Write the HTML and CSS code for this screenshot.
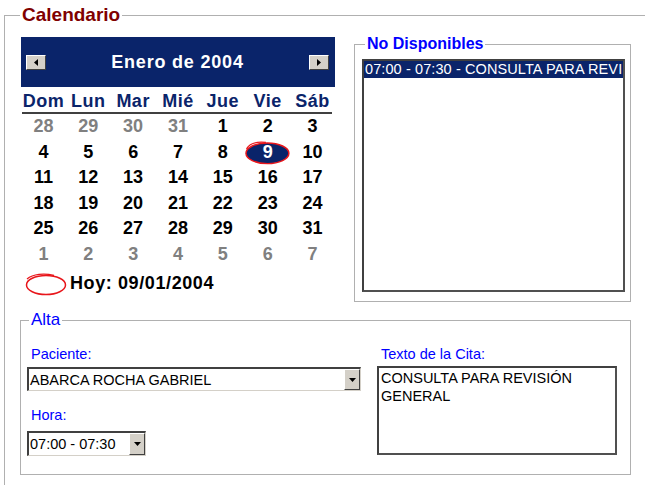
FILE: index.html
```html
<!DOCTYPE html>
<html lang="es">
<head>
<meta charset="utf-8">
<title>Calendario</title>
<link rel="stylesheet" href="styles.css">
</head>
<body>
<fieldset class="frame">
  <legend class="frame-title">Calendario</legend>
  <div class="top">
    <div class="cal">
      <div class="cal-head">
        <span class="nav-btn"><svg width="4" height="7" viewBox="0 0 4 7"><polygon points="4,0 0,3.5 4,7" fill="#000"/></svg></span>
        <span class="cal-title">Enero de 2004</span>
        <span class="nav-btn"><svg width="4" height="7" viewBox="0 0 4 7"><polygon points="0,0 4,3.5 0,7" fill="#000"/></svg></span>
      </div>
      <div class="dow-row">
        <div class="dow">Dom</div><div class="dow">Lun</div><div class="dow">Mar</div><div class="dow">Mié</div><div class="dow">Jue</div><div class="dow">Vie</div><div class="dow">Sáb</div>
      </div>
      <div class="rule"></div>
      <div class="cal-grid">
        <div class="day other">28</div><div class="day other">29</div><div class="day other">30</div><div class="day other">31</div><div class="day">1</div><div class="day">2</div><div class="day">3</div>
        <div class="day">4</div><div class="day">5</div><div class="day">6</div><div class="day">7</div><div class="day">8</div>
        <div class="day sel"><svg class="sel-mark" viewBox="0 0 45 26" preserveAspectRatio="none"><ellipse cx="22.5" cy="13.5" rx="21.5" ry="10.5" fill="#0a246a" stroke="#e8161b" stroke-width="1.5"/><path d="M1.5 9 C 5 3, 12 1.5, 21 2.5" fill="none" stroke="#e8161b" stroke-width="1.3"/></svg><span class="num">9</span></div>
        <div class="day">10</div>
        <div class="day">11</div><div class="day">12</div><div class="day">13</div><div class="day">14</div><div class="day">15</div><div class="day">16</div><div class="day">17</div>
        <div class="day">18</div><div class="day">19</div><div class="day">20</div><div class="day">21</div><div class="day">22</div><div class="day">23</div><div class="day">24</div>
        <div class="day">25</div><div class="day">26</div><div class="day">27</div><div class="day">28</div><div class="day">29</div><div class="day">30</div><div class="day">31</div>
        <div class="day other">1</div><div class="day other">2</div><div class="day other">3</div><div class="day other">4</div><div class="day other">5</div><div class="day other">6</div><div class="day other">7</div>
      </div>
      <div class="today">
        <svg class="today-mark" width="44" height="24" viewBox="0 0 44 24"><ellipse cx="22" cy="13" rx="19.5" ry="9.5" fill="none" stroke="#e8161b" stroke-width="1.5"/><path d="M3 7 C 9 2, 20 1, 30 3.5" fill="none" stroke="#e8161b" stroke-width="1.3"/></svg>
        <span class="today-text">Hoy: 09/01/2004</span>
      </div>
    </div>
    <fieldset class="box nodisp">
      <legend class="box-title strong">No Disponibles</legend>
      <div class="listbox">
        <div class="list-item">07:00 - 07:30 - CONSULTA PARA REVI</div>
      </div>
    </fieldset>
  </div>
  <fieldset class="box alta">
    <legend class="box-title alta-title">Alta</legend>
    <div class="alta-body">
      <div class="col-left">
        <div class="lbl">Paciente:</div>
        <div class="combo combo-wide"><span class="combo-text">ABARCA ROCHA GABRIEL</span><span class="combo-btn"><svg width="7" height="4" viewBox="0 0 7 4"><polygon points="0,0 7,0 3.5,4" fill="#000"/></svg></span></div>
        <div class="lbl lbl-hora">Hora:</div>
        <div class="combo combo-narrow"><span class="combo-text">07:00 - 07:30</span><span class="combo-btn"><svg width="7" height="4" viewBox="0 0 7 4"><polygon points="0,0 7,0 3.5,4" fill="#000"/></svg></span></div>
      </div>
      <div class="col-right">
        <div class="lbl">Texto de la Cita:</div>
        <div class="textarea">CONSULTA PARA REVISIÓN GENERAL</div>
      </div>
    </div>
  </fieldset>
</fieldset>
</body>
</html>
```

FILE: styles.css
```css
html, body {
  margin: 0;
  padding: 0;
  overflow: hidden;
  background: #fff;
}
body {
  width: 645px;
  height: 485px;
  font-family: "Liberation Sans", Arial, sans-serif;
  color: #000;
}

.frame {
  margin: 4px 0 0 4px;
  padding: 9px 0 0 0;
  border: 1px solid #b0b0b0;
  border-right: none;
  border-bottom: none;
  width: 641px;
  height: 481px;
  box-sizing: border-box;
}
.frame-title {
  margin-left: 15px;
  padding: 0 2px;
  font-weight: bold;
  font-size: 19px;
  line-height: 22px;
  color: #800000;
}

.top {
  display: flex;
  align-items: flex-start;
}

.cal {
  width: 314px;
  margin: 2px 0 0 16px;
}
.cal-head {
  height: 50px;
  background: #0a246a;
  display: flex;
  align-items: center;
  padding: 0 6px 0 5px;
  box-sizing: border-box;
}
.cal-title {
  flex: 1;
  text-align: center;
  color: #fff;
  font-weight: bold;
  font-size: 18px;
  letter-spacing: 0.8px;
}
.nav-btn {
  width: 20px;
  height: 15px;
  box-sizing: border-box;
  background: #d4d0c8;
  border: 1px solid;
  border-color: #fff #404040 #404040 #fff;
  display: flex;
  align-items: center;
  justify-content: center;
}
.nav-btn svg { display: block; }

.dow-row {
  display: grid;
  grid-template-columns: repeat(7, 1fr);
  padding-top: 4px;
}
.dow {
  text-align: center;
  color: #0a246a;
  font-weight: bold;
  font-size: 18px;
  line-height: 21px;
  letter-spacing: 0.5px;
}
.rule {
  height: 2px;
  margin: 0 3px 0 1px;
  background: #404040;
}

.cal-grid {
  display: grid;
  grid-template-columns: repeat(7, 1fr);
  grid-auto-rows: 25.6px;
}
.day {
  position: relative;
  text-align: center;
  font-weight: bold;
  font-size: 18px;
  line-height: 25.6px;
  color: #000;
}
.day.other { color: #808080; }
.day.sel { color: #fff; }
.sel-mark {
  position: absolute;
  left: 0;
  top: 0;
  width: 100%;
  height: 100%;
}
.num {
  position: relative;
}

.today {
  display: flex;
  align-items: center;
  height: 26px;
  margin-top: 3px;
}
.today-mark {
  display: block;
  margin-left: 3px;
  margin-right: 2px;
}
.today-text {
  font-weight: bold;
  font-size: 18px;
  letter-spacing: 0.6px;
}

.box {
  border: 1px solid #b0b0b0;
  box-sizing: border-box;
  min-width: 0;
}
.box-title {
  padding: 0 2px;
  color: #0000ff;
}
.strong {
  font-weight: bold;
  font-size: 16px;
  line-height: 18px;
}

.nodisp {
  margin: 0 0 0 19px;
  padding: 6px 5px 9px 7px;
  width: 277px;
}
.nodisp .box-title { margin-left: 3px; }

.listbox {
  height: 233px;
  box-sizing: border-box;
  border: 2px solid;
  border-color: #404040 #505050 #505050 #404040;
  background: #fff;
  overflow: hidden;
}
.list-item {
  height: 17px;
  line-height: 17px;
  padding-left: 1px;
  background: #0a246a;
  color: #fff;
  font-size: 14.5px;
  letter-spacing: 0.1px;
  white-space: nowrap;
}

.alta {
  margin: 8px 0 0 15px;
  padding: 16px 13px 18px 6px;
  width: 611px;
}
.alta-title {
  margin-left: 2px;
  font-size: 17px;
  line-height: 20px;
}
.alta-body {
  display: flex;
  gap: 16px;
}
.col-left {
  width: 334px;
}
.col-right {
  width: 240px;
}
.lbl {
  color: #0000ff;
  font-size: 14.5px;
  line-height: 16px;
  margin-left: 4px;
}
.lbl-hora {
  margin-top: 16px;
}

.combo {
  display: flex;
  align-items: stretch;
  box-sizing: border-box;
  background: #fff;
  border-top: 2px solid #404040;
  border-left: 2px solid #404040;
  border-right: 1px solid #d4d0c8;
  border-bottom: 1px solid #d4d0c8;
}
.combo-wide {
  margin-top: 5px;
  height: 24px;
}
.combo-narrow {
  margin-top: 8px;
  height: 25px;
  width: 119px;
}
.combo-text {
  flex: 1;
  display: flex;
  align-items: center;
  padding-left: 1px;
  font-size: 14.5px;
  white-space: nowrap;
  overflow: hidden;
}
.combo-btn {
  width: 16px;
  box-sizing: border-box;
  background: #d4d0c8;
  border: 1px solid;
  border-color: #fff #404040 #404040 #fff;
  display: flex;
  align-items: center;
  justify-content: center;
}
.combo-btn svg { display: block; }

.textarea {
  margin-top: 4px;
  height: 89px;
  box-sizing: border-box;
  border: 2px solid;
  border-color: #404040 #505050 #505050 #404040;
  padding: 1px 2px;
  font-size: 14.5px;
  line-height: 18px;
  background: #fff;
}
```
